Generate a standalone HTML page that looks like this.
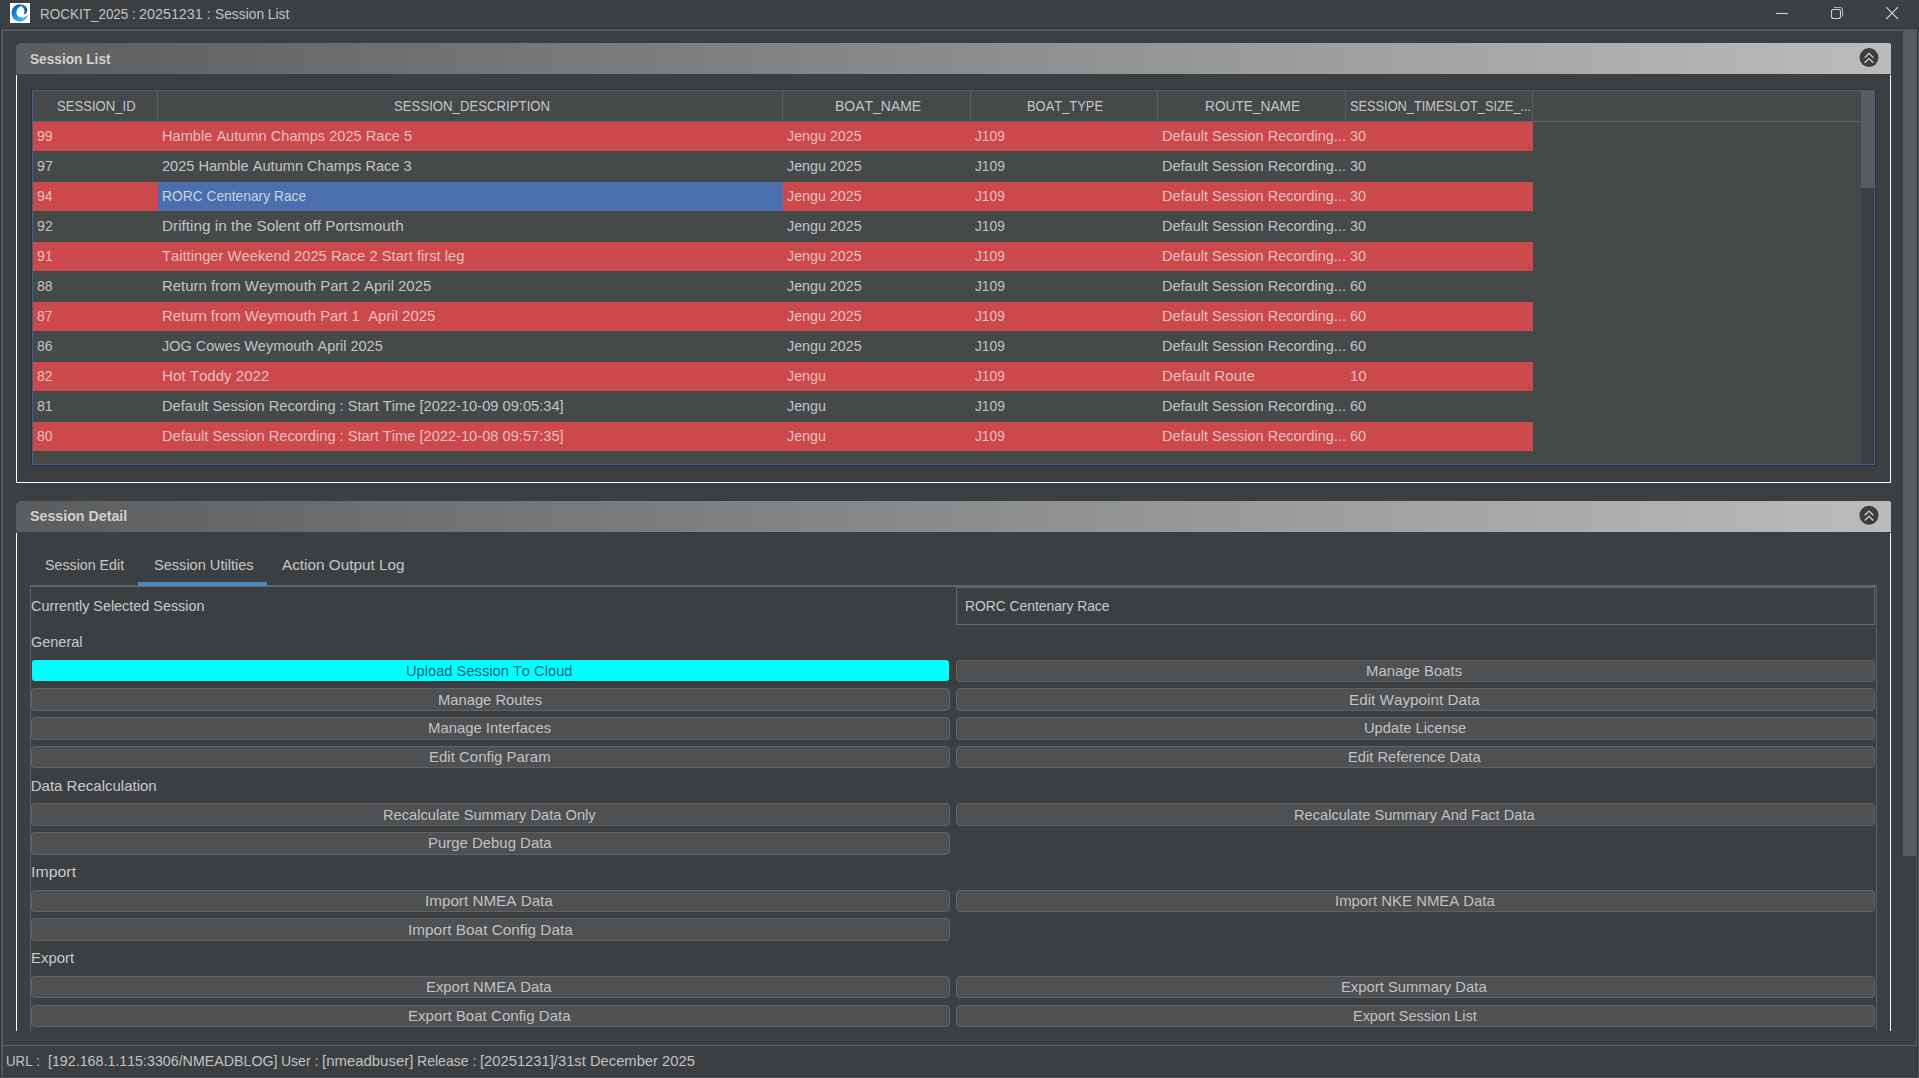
<!DOCTYPE html>
<html lang="en"><head><meta charset="utf-8"><title>ROCKIT_2025 : 20251231 : Session List</title>
<style>
html,body{margin:0;padding:0;background:#3c3f41;}
body{width:1919px;height:1078px;position:relative;overflow:hidden;font-family:"Liberation Sans",sans-serif;font-size:15px;color:#c9c9c9;}
div,span{position:absolute;box-sizing:border-box;}
.t{font-kerning:none;white-space:pre;line-height:20px;height:20px;transform-origin:0 0;}
.b{font-weight:bold;color:#d2d0ce;}
.ttl{color:#c2c2c2;}
.h{color:#c6c6c6;}
.r{color:#e8bebe;}
.d{color:#c3c3c3;}
.sel{color:#ccd2de;}
.cy{color:#17657a;}
.bt{color:#c2c2c2;}
.st{color:#c2c2c2;}
.tab{color:#c6c6c6;}
.btn{background:#4e5052;border:1px solid #606264;border-radius:4px;height:22px;}
.rr{background:#cb494b;height:29px;left:33px;width:1500px;}
</style></head><body>

<div style="left:0;top:0;width:1919px;height:29px;background:#3c3f41"></div>
<svg style="position:absolute;left:10px;top:3px" width="20" height="20" viewBox="0 0 20 20"><rect width="20" height="20" fill="#fff"/>
<defs><linearGradient id="wg" x1="0.2" y1="0" x2="0.7" y2="1"><stop offset="0" stop-color="#0c5ea6"/><stop offset="0.55" stop-color="#1c8fd9"/><stop offset="1" stop-color="#3fc2fa"/></linearGradient>
<linearGradient id="wh" x1="0" y1="0" x2="0.4" y2="1"><stop offset="0" stop-color="#1a86cf"/><stop offset="1" stop-color="#0a4a96"/></linearGradient></defs>
<path d="M11 1.4 C5 0.8 1.4 5.5 1.6 10.5 C1.8 15.5 6 19 10.5 18.7 C14 18.4 17 15.5 18.2 11.6 C16 14.2 13.2 15.1 10.8 14.6 C7.8 13.9 6.1 11.4 6.4 8.8 C6.7 5.9 8.8 3.7 11.4 3.3 Z" fill="url(#wg)"/>
<path d="M11 1.4 C14 1.2 17 3.6 17.2 6.8 C17.3 9.2 16 11.2 13.4 11.6 C14.4 10.4 14.8 9 14.4 7.5 C14 5.6 12.8 4 11.4 3.3 Z" fill="url(#wh)"/></svg>
<svg style="position:absolute;left:1760px;top:0" width="159" height="28" viewBox="0 0 159 28" fill="none" stroke="#d0d0d0" stroke-width="1.1">
<path d="M16 13.5 H28"/>
<rect x="71.5" y="9.5" width="9" height="9" rx="2"/>
<path d="M74 7.5 H79.6 Q82.6 7.5 82.6 10.5 V16.2" stroke-opacity="0.75"/>
<path d="M126.2 7.2 L138 19 M138 7.2 L126.2 19"/>
</svg>
<div style="left:0;top:28px;width:1919px;height:1px;background:#323537"></div>
<div style="left:1px;top:29px;width:1916px;height:2px;background:#55585a"></div>
<div style="left:1px;top:29px;width:2px;height:1047px;background:#55585a"></div>
<div style="left:0;top:29px;width:1px;height:1049px;background:#313335"></div>
<div style="left:1916px;top:29px;width:1px;height:1017px;background:#5a5d5f"></div>
<div style="left:1917px;top:29px;width:1px;height:1048px;background:#2f3133"></div>
<div style="left:1918px;top:29px;width:1px;height:1049px;background:#575b5d"></div>
<div style="left:1903px;top:31px;width:13px;height:825px;background:#595c5e"></div>
<div style="left:16px;top:43px;width:1875px;height:31px;border-radius:5px 2px 0 0;background:linear-gradient(90deg,#5a5c5e 0%,#bbbbbb 100%)"></div>
<svg style="position:absolute;left:1858px;top:46px" width="22" height="22" viewBox="0 0 22 22"><circle cx="11" cy="11.60" r="9.5" fill="#3b3e40"/><path d="M6.7 11.60 L11 7.40 L15.3 11.60 M6.7 16.80 L11 12.60 L15.3 16.80" fill="none" stroke="#d6d6d6" stroke-width="1.3"/></svg>
<div style="left:16px;top:75px;width:1875px;height:408px;border:1px solid #fff;border-top:none"></div>
<div style="left:16px;top:501px;width:1875px;height:31px;border-radius:5px 2px 0 0;background:linear-gradient(90deg,#5a5c5e 0%,#bbbbbb 100%)"></div>
<svg style="position:absolute;left:1858px;top:504px" width="22" height="22" viewBox="0 0 22 22"><circle cx="11" cy="11.30" r="9.5" fill="#3b3e40"/><path d="M6.7 11.30 L11 7.10 L15.3 11.30 M6.7 16.50 L11 12.30 L15.3 16.50" fill="none" stroke="#d6d6d6" stroke-width="1.3"/></svg>
<div style="left:16px;top:533px;width:1875px;height:498px;border-left:1px solid #fff;border-right:1px solid #fff"></div>
<div style="left:31px;top:89px;width:1845px;height:377px;border:1px solid #2f3234;background:#45494a"></div>
<div style="left:32px;top:90px;width:1843px;height:375px;border:1px solid #3e6288;"></div>
<div style="left:33px;top:121px;width:1828px;height:1px;background:#5f6365"></div>
<div style="left:157px;top:91px;width:1px;height:30px;background:#5a5e60"></div>
<div style="left:782px;top:91px;width:1px;height:30px;background:#5a5e60"></div>
<div style="left:970px;top:91px;width:1px;height:30px;background:#5a5e60"></div>
<div style="left:1157px;top:91px;width:1px;height:30px;background:#5a5e60"></div>
<div style="left:1345px;top:91px;width:1px;height:30px;background:#5a5e60"></div>
<div style="left:1532px;top:91px;width:1px;height:30px;background:#5a5e60"></div>
<div class="rr" style="top:122px"></div>
<div class="rr" style="top:182px"></div>
<div class="rr" style="top:242px"></div>
<div class="rr" style="top:302px"></div>
<div class="rr" style="top:362px"></div>
<div class="rr" style="top:422px"></div>
<div style="left:158px;top:182px;width:625px;height:29px;background:#4b6eaf"></div>
<div style="left:1861px;top:91px;width:13px;height:373px;background:#3c3f41"></div>
<div style="left:1861px;top:91px;width:13px;height:97px;background:#595c5e"></div>
<div style="left:30px;top:585px;width:1847px;height:460px;border:1px solid #5e6163;border-top:2px solid #606365;border-bottom:none"></div>
<div style="left:138px;top:582px;width:129px;height:4px;background:#4a88c7"></div>
<div style="left:956px;top:587px;width:1920px;height:38px;width:919px;border:1px solid #646769;background:#3c3f41"></div>
<div class="btn" style="left:32px;top:660px;width:917px;height:21px;background:#00ffff;border:none;border-radius:3px"></div>
<div class="btn" style="left:956px;top:660px;width:919px;height:22px"></div>
<div class="btn" style="left:31px;top:688px;width:919px;height:23px"></div>
<div class="btn" style="left:956px;top:688px;width:919px;height:23px"></div>
<div class="btn" style="left:31px;top:717px;width:919px;height:23px"></div>
<div class="btn" style="left:956px;top:717px;width:919px;height:23px"></div>
<div class="btn" style="left:31px;top:746px;width:919px;height:22px"></div>
<div class="btn" style="left:956px;top:746px;width:919px;height:22px"></div>
<div class="btn" style="left:31px;top:803px;width:919px;height:23px"></div>
<div class="btn" style="left:956px;top:803px;width:919px;height:23px"></div>
<div class="btn" style="left:31px;top:832px;width:919px;height:23px"></div>
<div class="btn" style="left:31px;top:890px;width:919px;height:22px"></div>
<div class="btn" style="left:956px;top:890px;width:919px;height:22px"></div>
<div class="btn" style="left:31px;top:918px;width:919px;height:23px"></div>
<div class="btn" style="left:31px;top:976px;width:919px;height:22px"></div>
<div class="btn" style="left:956px;top:976px;width:919px;height:22px"></div>
<div class="btn" style="left:31px;top:1005px;width:919px;height:22px"></div>
<div class="btn" style="left:956px;top:1005px;width:919px;height:22px"></div>
<div style="left:3px;top:1031px;width:1900px;height:14px;background:#3c3f41"></div>
<div style="left:3px;top:1045px;width:1914px;height:1px;background:#5d6062"></div>
<div style="left:0;top:1076px;width:1918px;height:1px;background:#2f3133"></div>
<div style="left:0;top:1077px;width:1919px;height:1px;background:#575b5d"></div>
<span class="t ttl" style="left:40.29px;top:4.00px;transform:scaleX(0.8981);">ROCKIT_2025 :</span>
<span class="t ttl" style="left:139.48px;top:4.00px;transform:scaleX(0.9555);">20251231 :</span>
<span class="t ttl" style="left:214.57px;top:4.00px;transform:scaleX(0.9190);">Session List</span>
<span class="t b" style="left:30.41px;top:48.50px;transform:scaleX(0.9117);">Session List</span>
<span class="t b" style="left:30.39px;top:505.70px;transform:scaleX(0.9481);">Session Detail</span>
<span class="t h" style="left:56.81px;top:95.50px;transform:scaleX(0.8733);">SESSION_ID</span>
<span class="t h" style="left:393.80px;top:95.50px;transform:scaleX(0.8791);">SESSION_DESCRIPTION</span>
<span class="t h" style="left:835.25px;top:95.50px;transform:scaleX(0.9311);">BOAT_NAME</span>
<span class="t h" style="left:1027.34px;top:95.50px;transform:scaleX(0.8603);">BOAT_TYPE</span>
<span class="t h" style="left:1205.28px;top:95.50px;transform:scaleX(0.9130);">ROUTE_NAME</span>
<span class="t h" style="left:1349.82px;top:95.50px;transform:scaleX(0.8522);">SESSION_TIMESLOT_SIZE_...</span>
<span class="t r" style="left:37.24px;top:125.50px;transform:scaleX(0.9430);">99</span>
<span class="t r" style="left:161.70px;top:125.50px;transform:scaleX(0.9736);">Hamble Autumn Champs 2025 Race 5</span>
<span class="t r" style="left:786.78px;top:125.50px;transform:scaleX(0.9517);">Jengu 2025</span>
<span class="t r" style="left:974.69px;top:125.50px;transform:scaleX(0.9151);">J109</span>
<span class="t r" style="left:1161.71px;top:125.50px;transform:scaleX(0.9675);">Default Session Recording...</span>
<span class="t r" style="left:1350.35px;top:125.50px;transform:scaleX(0.9596);">30</span>
<span class="t d" style="left:37.24px;top:155.50px;transform:scaleX(0.9457);">97</span>
<span class="t d" style="left:162.17px;top:155.50px;transform:scaleX(0.9719);">2025 Hamble Autumn Champs Race 3</span>
<span class="t d" style="left:786.78px;top:155.50px;transform:scaleX(0.9517);">Jengu 2025</span>
<span class="t d" style="left:974.69px;top:155.50px;transform:scaleX(0.9151);">J109</span>
<span class="t d" style="left:1161.71px;top:155.50px;transform:scaleX(0.9675);">Default Session Recording...</span>
<span class="t d" style="left:1350.35px;top:155.50px;transform:scaleX(0.9596);">30</span>
<span class="t r" style="left:37.25px;top:185.50px;transform:scaleX(0.9265);">94</span>
<span class="t sel" style="left:161.77px;top:185.50px;transform:scaleX(0.9197);">RORC Centenary Race</span>
<span class="t r" style="left:786.78px;top:185.50px;transform:scaleX(0.9517);">Jengu 2025</span>
<span class="t r" style="left:974.69px;top:185.50px;transform:scaleX(0.9151);">J109</span>
<span class="t r" style="left:1161.71px;top:185.50px;transform:scaleX(0.9675);">Default Session Recording...</span>
<span class="t r" style="left:1350.35px;top:185.50px;transform:scaleX(0.9596);">30</span>
<span class="t d" style="left:37.24px;top:215.50px;transform:scaleX(0.9457);">92</span>
<span class="t d" style="left:161.64px;top:215.50px;transform:scaleX(1.0205);">Drifting in the Solent off Portsmouth</span>
<span class="t d" style="left:786.78px;top:215.50px;transform:scaleX(0.9517);">Jengu 2025</span>
<span class="t d" style="left:974.69px;top:215.50px;transform:scaleX(0.9151);">J109</span>
<span class="t d" style="left:1161.71px;top:215.50px;transform:scaleX(0.9675);">Default Session Recording...</span>
<span class="t d" style="left:1350.35px;top:215.50px;transform:scaleX(0.9596);">30</span>
<span class="t r" style="left:37.24px;top:245.50px;transform:scaleX(0.9443);">91</span>
<span class="t r" style="left:162.07px;top:245.50px;transform:scaleX(0.9832);">Taittinger Weekend 2025 Race 2 Start first leg</span>
<span class="t r" style="left:786.78px;top:245.50px;transform:scaleX(0.9517);">Jengu 2025</span>
<span class="t r" style="left:974.69px;top:245.50px;transform:scaleX(0.9151);">J109</span>
<span class="t r" style="left:1161.71px;top:245.50px;transform:scaleX(0.9675);">Default Session Recording...</span>
<span class="t r" style="left:1350.35px;top:245.50px;transform:scaleX(0.9596);">30</span>
<span class="t d" style="left:37.29px;top:275.50px;transform:scaleX(0.9362);">88</span>
<span class="t d" style="left:161.68px;top:275.50px;transform:scaleX(0.9937);">Return from Weymouth Part 2 April 2025</span>
<span class="t d" style="left:786.78px;top:275.50px;transform:scaleX(0.9517);">Jengu 2025</span>
<span class="t d" style="left:974.69px;top:275.50px;transform:scaleX(0.9151);">J109</span>
<span class="t d" style="left:1161.71px;top:275.50px;transform:scaleX(0.9675);">Default Session Recording...</span>
<span class="t d" style="left:1350.16px;top:275.50px;transform:scaleX(0.9715);">60</span>
<span class="t r" style="left:37.29px;top:305.50px;transform:scaleX(0.9425);">87</span>
<span class="t r" style="left:161.68px;top:305.50px;transform:scaleX(0.9932);">Return from Weymouth Part 1&nbsp; April 2025</span>
<span class="t r" style="left:786.78px;top:305.50px;transform:scaleX(0.9517);">Jengu 2025</span>
<span class="t r" style="left:974.69px;top:305.50px;transform:scaleX(0.9151);">J109</span>
<span class="t r" style="left:1161.71px;top:305.50px;transform:scaleX(0.9675);">Default Session Recording...</span>
<span class="t r" style="left:1350.16px;top:305.50px;transform:scaleX(0.9715);">60</span>
<span class="t d" style="left:37.29px;top:335.50px;transform:scaleX(0.9367);">86</span>
<span class="t d" style="left:162.17px;top:335.50px;transform:scaleX(0.9664);">JOG Cowes Weymouth April 2025</span>
<span class="t d" style="left:786.78px;top:335.50px;transform:scaleX(0.9517);">Jengu 2025</span>
<span class="t d" style="left:974.69px;top:335.50px;transform:scaleX(0.9151);">J109</span>
<span class="t d" style="left:1161.71px;top:335.50px;transform:scaleX(0.9675);">Default Session Recording...</span>
<span class="t d" style="left:1350.16px;top:335.50px;transform:scaleX(0.9715);">60</span>
<span class="t r" style="left:37.29px;top:365.50px;transform:scaleX(0.9425);">82</span>
<span class="t r" style="left:161.66px;top:365.50px;transform:scaleX(1.0062);">Hot Toddy 2022</span>
<span class="t r" style="left:786.78px;top:365.50px;transform:scaleX(0.9536);">Jengu</span>
<span class="t r" style="left:974.69px;top:365.50px;transform:scaleX(0.9151);">J109</span>
<span class="t r" style="left:1161.65px;top:365.50px;transform:scaleX(1.0120);">Default Route</span>
<span class="t r" style="left:1349.76px;top:365.50px;transform:scaleX(0.9963);">10</span>
<span class="t d" style="left:37.29px;top:395.50px;transform:scaleX(0.9412);">81</span>
<span class="t d" style="left:161.70px;top:395.50px;transform:scaleX(0.9771);">Default Session Recording : Start Time [2022-10-09 09:05:34]</span>
<span class="t d" style="left:786.78px;top:395.50px;transform:scaleX(0.9536);">Jengu</span>
<span class="t d" style="left:974.69px;top:395.50px;transform:scaleX(0.9151);">J109</span>
<span class="t d" style="left:1161.71px;top:395.50px;transform:scaleX(0.9675);">Default Session Recording...</span>
<span class="t d" style="left:1350.16px;top:395.50px;transform:scaleX(0.9715);">60</span>
<span class="t r" style="left:37.29px;top:425.50px;transform:scaleX(0.9322);">80</span>
<span class="t r" style="left:161.70px;top:425.50px;transform:scaleX(0.9771);">Default Session Recording : Start Time [2022-10-08 09:57:35]</span>
<span class="t r" style="left:786.78px;top:425.50px;transform:scaleX(0.9536);">Jengu</span>
<span class="t r" style="left:974.69px;top:425.50px;transform:scaleX(0.9151);">J109</span>
<span class="t r" style="left:1161.71px;top:425.50px;transform:scaleX(0.9675);">Default Session Recording...</span>
<span class="t r" style="left:1350.16px;top:425.50px;transform:scaleX(0.9715);">60</span>
<span class="t tab" style="left:44.75px;top:555.00px;transform:scaleX(0.9493);">Session Edit</span>
<span class="t tab" style="left:153.74px;top:555.00px;transform:scaleX(0.9712);">Session Utilties</span>
<span class="t tab" style="left:282.37px;top:555.00px;transform:scaleX(1.0194);">Action Output Log</span>
<span class="t " style="left:31.07px;top:595.50px;transform:scaleX(0.9588);">Currently Selected Session</span>
<span class="t " style="left:964.77px;top:595.50px;transform:scaleX(0.9217);">RORC Centenary Race</span>
<span class="t " style="left:31.27px;top:631.90px;transform:scaleX(0.9650);">General</span>
<span class="t " style="left:30.77px;top:775.65px;transform:scaleX(1.0000);">Data Recalculation</span>
<span class="t " style="left:30.53px;top:861.90px;transform:scaleX(1.0606);">Import</span>
<span class="t " style="left:30.78px;top:948.15px;transform:scaleX(0.9950);">Export</span>
<span class="t cy" style="left:406.27px;top:660.85px;transform:scaleX(0.9787);">Upload Session To Cloud</span>
<span class="t bt" style="left:1366.18px;top:660.85px;transform:scaleX(0.9941);">Manage Boats</span>
<span class="t bt" style="left:438.19px;top:689.60px;transform:scaleX(0.9834);">Manage Routes</span>
<span class="t bt" style="left:1349.15px;top:689.60px;transform:scaleX(1.0176);">Edit Waypoint Data</span>
<span class="t bt" style="left:428.18px;top:718.35px;transform:scaleX(0.9913);">Manage Interfaces</span>
<span class="t bt" style="left:1364.27px;top:718.35px;transform:scaleX(0.9803);">Update License</span>
<span class="t bt" style="left:429.17px;top:747.10px;transform:scaleX(0.9991);">Edit Config Param</span>
<span class="t bt" style="left:1348.19px;top:747.10px;transform:scaleX(0.9817);">Edit Reference Data</span>
<span class="t bt" style="left:383.20px;top:804.60px;transform:scaleX(0.9773);">Recalculate Summary Data Only</span>
<span class="t bt" style="left:1294.20px;top:804.60px;transform:scaleX(0.9750);">Recalculate Summary And Fact Data</span>
<span class="t bt" style="left:428.18px;top:833.35px;transform:scaleX(0.9950);">Purge Debug Data</span>
<span class="t bt" style="left:424.99px;top:890.85px;transform:scaleX(1.0154);">Import NMEA Data</span>
<span class="t bt" style="left:1335.03px;top:890.85px;transform:scaleX(0.9932);">Import NKE NMEA Data</span>
<span class="t bt" style="left:407.98px;top:919.60px;transform:scaleX(1.0243);">Import Boat Config Data</span>
<span class="t bt" style="left:426.18px;top:977.10px;transform:scaleX(0.9914);">Export NMEA Data</span>
<span class="t bt" style="left:1341.19px;top:977.10px;transform:scaleX(0.9869);">Export Summary Data</span>
<span class="t bt" style="left:408.16px;top:1005.85px;transform:scaleX(1.0055);">Export Boat Config Data</span>
<span class="t bt" style="left:1353.21px;top:1005.85px;transform:scaleX(0.9634);">Export Session List</span>
<span class="t st" style="left:5.98px;top:1050.80px;transform:scaleX(0.8851);">URL :</span>
<span class="t st" style="left:47.78px;top:1050.80px;transform:scaleX(0.9492);">[192.168.1.115:3306/NMEADBLOG]</span>
<span class="t st" style="left:280.82px;top:1050.80px;transform:scaleX(0.9339);">User :</span>
<span class="t st" style="left:321.54px;top:1050.80px;transform:scaleX(0.9957);">[nmeadbuser]</span>
<span class="t st" style="left:417.05px;top:1050.80px;transform:scaleX(0.9363);">Release :</span>
<span class="t st" style="left:479.95px;top:1050.80px;transform:scaleX(0.9834);">[20251231]/31st December 2025</span>
</body></html>
